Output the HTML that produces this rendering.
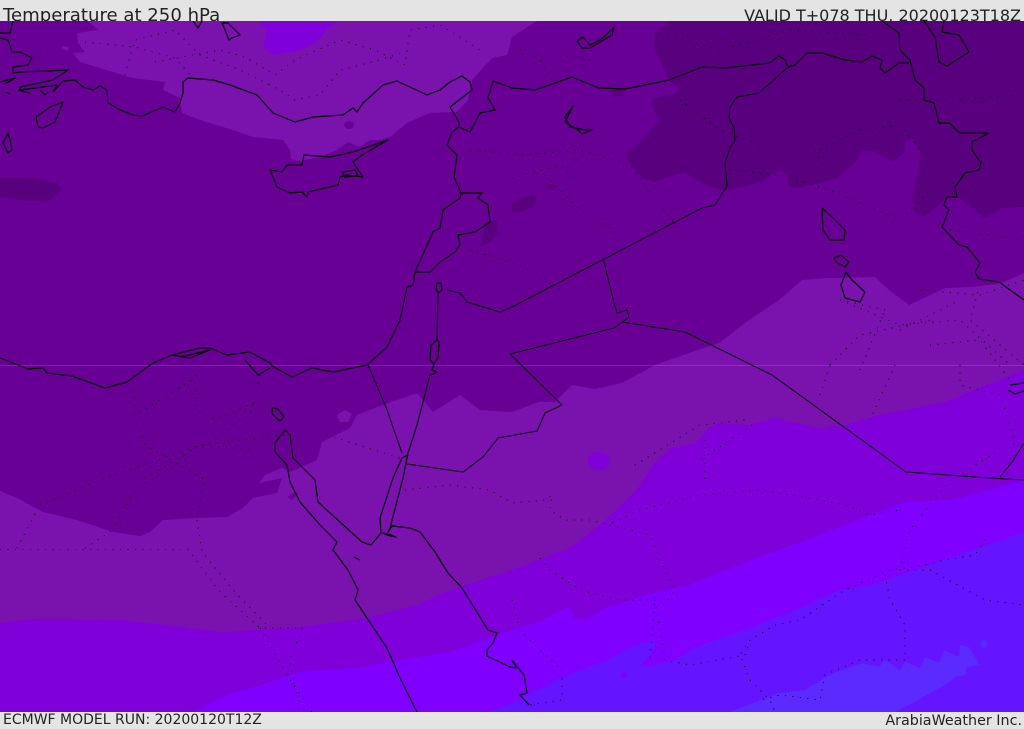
<!DOCTYPE html>
<html><head><meta charset="utf-8"><title>Temperature at 250 hPa</title>
<style>
html,body{margin:0;padding:0;background:#e4e4e4;width:1024px;height:729px;overflow:hidden}
.t{position:absolute;font-family:"DejaVu Sans",sans-serif;color:#222;white-space:nowrap;line-height:1}
svg{position:absolute;left:0;top:0}
</style></head><body>
<div class="t" style="left:3px;top:7px;font-size:18.1px">Temperature at 250 hPa</div>
<div class="t" style="right:3px;top:8px;font-size:16px">VALID T+078 THU, 20200123T18Z</div>
<div class="t" style="left:3px;top:713px;font-size:14px">ECMWF MODEL RUN: 20200120T12Z</div>
<div class="t" style="right:2px;top:714px;font-size:14.3px">ArabiaWeather Inc.</div>
<svg width="1024" height="729" viewBox="0 0 1024 729">
<defs><clipPath id="m"><rect x="0" y="21" width="1024" height="691"/></clipPath></defs>
<g clip-path="url(#m)">
<rect x="0" y="21" width="1024" height="691" fill="#680096"/>
<g stroke-linejoin="round">
<path fill="#59007f" d="M669,21L655,33L654,48L662,65L669,80L680,90L672,95L654,98L652,107L659,120L645,137L627,153L629,163L642,178L655,182L672,176L685,172L699,182L725,191L742,187L762,182L779,170L787,175L789,187L799,188L837,178L855,163L862,150L875,152L892,162L904,153L905,142L912,138L920,150L920,160L912,200L915,213L924,217L935,208L949,197L959,198L985,218L1002,208L1024,207V21Z"/>
<path fill="#59007f" d="M0,177L33,178L57,183L62,189L50,200L30,201L0,197Z"/>
<path fill="#59007f" d="M512,202L530,195L537,197L533,207L520,212L512,212Z"/>
<path fill="#59007f" d="M480,247L485,222L497,220L498,233L490,242Z"/>
<ellipse cx="618" cy="93" rx="7" ry="4" fill="#59007f"/>
<ellipse cx="576" cy="159" rx="4" ry="2" fill="#59007f"/>
<ellipse cx="551" cy="187" rx="4" ry="3" fill="#59007f"/>
<path fill="#7a12ae" d="M88,21L98,30L77,33L78,43L85,52L73,53L80,62L113,72L133,78L165,82L163,90L180,98L182,113L200,120L233,130L253,137L283,140L290,150L291,159L300,161L320,157L337,150L348,142L360,147L370,140L380,140L390,137L407,123L430,113L457,112L468,100L472,80L492,58L507,55L512,37L537,21Z"/>
<ellipse cx="349" cy="125" rx="5" ry="4" fill="#680096"/>
<path fill="#7f00d9" d="M257,21L267,30L263,47L273,55L300,50L317,42L328,28L340,21Z"/>
<path fill="#7a12ae" d="M62,46L68,47L68,51L62,49Z"/>
<path fill="#7a12ae" d="M0,491L17,498L43,512L77,520L113,532L140,536L150,532L163,520L197,518L227,517L243,508L253,498L277,493L282,478L259,483L265,475L282,468L290,472L317,460L322,442L350,428L357,415L377,407L417,393L433,412L460,395L480,410L512,412L539,402L555,402L572,385L595,389L622,383L655,365L692,352L719,343L745,323L779,300L802,280L829,278L875,277L889,290L909,305L945,288L972,287L1002,283L1024,273V712H0Z"/>
<path fill="#7a12ae" d="M337,415L345,410L352,414L348,422L340,422Z"/>
<path fill="#680096" d="M287,497L295,492L298,494L292,500Z"/>
<path fill="#7f00d9" d="M1024,370L945,402L879,415L845,425L819,428L775,418L749,425L719,423L709,428L695,443L672,448L655,462L635,492L602,523L569,548L542,558L512,570L450,590L417,605L367,618L300,627L223,632L123,620L33,619L0,623V712H1024Z"/>
<ellipse cx="599" cy="461" rx="11" ry="9" fill="#7f00d9"/>
<path fill="#8000ff" d="M193,712L227,695L267,683L300,672L363,667L400,660L450,652L512,630L539,622L569,606L574,618L585,620L605,608L625,602L652,593L689,585L759,557L812,538L862,518L905,502L952,500L1024,480V712Z"/>
<path fill="#6414ff" d="M487,712L512,703L562,677L612,658L629,647L654,640L655,648L640,667L675,660L695,647L739,632L795,610L839,590L872,585L929,565L1024,532V712Z"/>
<ellipse cx="624" cy="675" rx="3" ry="2.5" fill="#8000ff"/>
<path fill="#5a2aff" d="M730,712L779,693L805,690L829,675L862,663L879,667L885,660L900,670L905,662L920,668L925,657L939,663L944,650L959,657L960,645L969,647L980,665L967,667L965,675L955,677L945,685L909,705L895,712Z"/>
<ellipse cx="984" cy="644" rx="3" ry="4" fill="#5a2aff"/>
</g>
<path d="M0,365.5H1024" stroke="#fff" stroke-opacity=".13" stroke-width="1"/>
<g fill="none" stroke="#000" stroke-width="1" stroke-dasharray="1 6.5">
<path d="M85,42L135,47L175,58L190,75M125,75L135,40L175,30L200,55L240,70L280,90L295,100L320,95L340,70L380,60L410,50M155,62L220,50L245,57L275,75L295,60L340,40L375,50L405,65L410,30L440,25L480,50"/>
<path d="M470,150L520,155L580,150L630,165L660,205L680,230M512,178L560,165L575,180M540,170L580,210L620,235M470,250L520,265L560,290M590,60L555,55M520,50L540,60L555,85"/>
<path d="M660,33L720,50L790,30L870,35M680,100L720,130L760,145M820,150L860,130L900,125M815,150L825,170M730,170L780,175L830,190L900,220L930,190M900,100L960,100L1020,95M905,130L920,150M920,290L980,295L1024,280M950,230L1024,240M900,330L960,300M885,310L840,300M860,370L885,310M980,285L970,320L1024,365"/>
<path d="M133,375L135,415L200,375M195,375L197,410L215,420L260,400M260,375L250,415L240,420L200,450L135,490L113,530M135,415L145,445L205,480L197,518"/>
<path d="M40,505L100,480L200,445L285,435M145,478L200,445L250,450"/>
<path d="M0,549.5H188L220,592L260,628L302,628M197,520L202,552L235,592L270,628M17,548L38,508M85,548L113,530M302,628L290,660L300,712M260,628L290,680L312,712"/>
<path d="M327,435L390,455L405,460M405,490L450,485L490,490L512,503L545,500L552,495L550,510L565,520L590,520L610,525"/>
<path d="M612,523L640,510L700,495L760,490L820,500L845,505L870,515L900,510M610,525L650,535L660,560L675,590L660,610M635,465L700,425L745,420M705,463L705,480M705,440L705,480M752,425L700,460"/>
<path d="M540,558L550,570L580,590L620,600L655,600L660,630L665,660L690,665L745,655M512,600L520,630L540,650L562,670L562,700L530,705M655,597L650,660"/>
<path d="M745,655L750,640L775,625L800,620L845,590L890,570L925,565L945,560L975,555L985,540M900,570L910,530L950,480L1000,450M900,570L930,570L985,600L1024,605M885,575L890,600L905,625L905,660L860,660L825,675L820,700L780,695L760,700M750,640L740,655L750,680L770,700L775,712"/>
<path d="M820,395L830,365M895,365L870,420M960,365L960,385L1000,395L1015,440L1005,480"/>
<path d="M840,300L900,325L960,320L1010,365M930,345L980,340L1010,380M830,365L860,335L930,320"/>
</g>
<g fill="none" stroke="#000" stroke-width="1.2" stroke-linejoin="round">
<path d="M53,92L63,81L75,80L83,87L93,90L100,86L107,90L108,103L120,110L133,115L142,116L163,107L175,112L180,103L183,93L183,82L188,78L213,80L230,85L257,95L273,113L295,122L313,117L343,115L353,108L357,112L363,103L383,85L397,81L427,95L440,90L450,82L462,76L470,82L472,90L450,107L459,122L459,127L452,132L447,145L457,155L454,177L461,193L460,198L443,210L440,228L433,232L415,272L413,285L407,287L400,320L387,347L367,365L333,372L312,368L292,377L272,366L270,363L250,352L227,355L210,348L200,348L172,355L153,363L127,382L105,388L72,376L47,373L43,368L28,369L18,365L0,358"/>
<path d="M245,360L258,375L270,368M172,355L190,358L210,350L180,357"/>
<path d="M0,33H10L13,21M0,38L8,40L12,52L20,52L32,58L28,65L13,67L13,73L23,72L68,70L53,80L20,87L20,90L57,85L53,92M0,82L15,78L5,84M6,92L11,94M18,90L30,93M40,90L45,95L48,92"/>
<path d="M63,102L50,107L36,117L38,127L43,128L55,122Z"/>
<path d="M8,133L3,143L8,153L12,150L10,140Z"/>
<path d="M270,170L282,172L287,165L302,165L304,155L330,157L353,152L388,140L362,155L353,162L357,168L363,177L347,175L340,177L338,185L308,192L307,197L302,192L290,193L277,187Z"/>
<path d="M222,23L228,23L240,35L232,38L229,40L225,30ZM193,21L198,28L202,21M342,172L355,170L358,176L345,177Z"/>
<path d="M437,283L441,283L442,290L438,293L436,288ZM438,293L437,340M431,345L437,340L439,342L438,358L434,364L430,360ZM434,364L432,370L437,372L433,374L430,375L417,425L408,453L403,478L390,528"/>
<path d="M408,455L402,458L393,478L380,518L381,533L371,545L362,542L340,522L318,502L315,480L293,458L290,435L285,430L275,443L275,452L287,465L290,482L300,502L320,525L337,542L333,550L348,570L358,590L355,600L387,648L400,678L417,712"/>
<path d="M272,408L278,409L284,417L280,421L272,414Z"/>
<path d="M390,528L388,532L392,526L410,528L420,532L435,552L448,573L462,588L488,630L497,633L493,643L487,650L487,656L510,667L516,668L512,660L524,675L527,693L520,695L529,705"/>
<path d="M383,533L391,535L396,537L387,535ZM354,557L360,560"/>
<path d="M1010,385L1024,383M1008,390L1015,394L1024,391"/>
<path d="M577,41L583,37L590,45L600,40L606,35L614,27L612,35L600,42L590,48L582,48Z"/>
<path d="M573,106L565,117L570,127L585,130L592,130L582,134L578,130L565,122Z"/>
<path d="M822,208L830,215L845,230L844,240L830,240L823,230Z"/>
<path d="M834,258L841,255L849,262L845,267L836,262Z"/>
<path d="M846,272L852,280L865,292L860,302L845,298L841,285Z"/>
<path d="M882,21L899,33L900,50L910,60L915,80L924,88L924,100L934,103L939,123L949,123L960,133L989,133L972,142L972,150L981,163L979,170L965,173L955,187L957,197L947,197L944,205L949,210L942,227L959,245L967,247L980,263L975,272L979,279L999,282L1024,300"/>
<path d="M924,21L935,37L939,62L947,66L969,52L959,35L942,32L944,21"/>
</g>
<g fill="none" stroke="#000" stroke-width="1" stroke-linejoin="round">
<path d="M368,365L386,407L402,453"/>
<path d="M407,464L463,472L483,457L498,438L537,431L545,413L562,405L510,354L614,328L629,317L627,310L617,313L614,303L603,258"/>
<path d="M447,290L460,293L467,302L500,312L512,307L702,208L715,205L727,186L725,163L730,148L735,140L734,128L729,118L730,107L737,97L759,93L787,68"/>
<path d="M622,322L685,332L772,375L906,472L990,478L1024,480M1000,477L1012,462L1024,443"/>
</g>
<g fill="none" stroke="#000" stroke-width="1.2" stroke-linejoin="round">
<path d="M459,127L470,132L480,113L495,110L488,98L493,81L512,88L535,90L572,77L599,88L625,89L669,80L702,67L725,68L769,63L779,56L785,60L788,67L795,65L807,53L822,53L845,60L862,62L872,56L882,60L880,68L885,73L899,63L909,63"/>
<path d="M415,272L430,272L440,262L455,252L460,245L458,235L475,232L490,222L488,205L478,198L482,193H461"/>
</g>
</g>
</svg>
</body></html>
